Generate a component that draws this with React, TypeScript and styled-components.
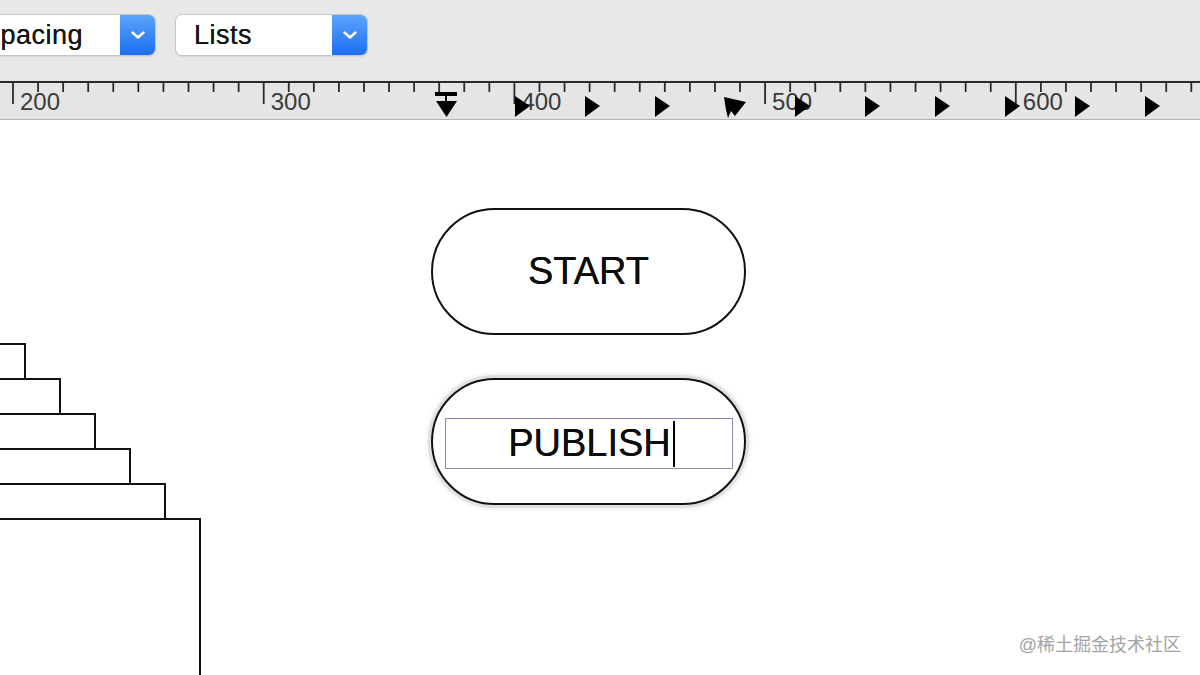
import styled, { createGlobalStyle } from "styled-components";

const GlobalStyle = createGlobalStyle`
  html, body {
    margin: 0;
    padding: 0;
    background: #fff;
    overflow: hidden;
  }
  body {
    font-family: "Liberation Sans", Arial, sans-serif;
  }
`;

const TICK = 25.07;
const FIRST_TICK = 13;
const TAB_STOPS = [515, 585, 655, 795, 865, 935, 1005, 1075, 1145];
const STEPS = [25, 60, 95, 130, 165];

const Chevron = () => (
  <svg width="16" height="10" viewBox="0 0 16 10" fill="none">
    <path
      d="M2.5 2.5l5.5 5 5.5-5"
      stroke="#fff"
      strokeWidth="2.4"
      strokeLinecap="round"
      strokeLinejoin="round"
    />
  </svg>
);

const Select = ({ label, offset }: { label: string; offset?: number }) => (
  <SelectBox $offset={offset}>
    <SelectLabel>{label}</SelectLabel>
    <SelectArrow>
      <Chevron />
    </SelectArrow>
  </SelectBox>
);

const RulerDrawing = () => {
  const ticks = [];
  for (let k = 0; FIRST_TICK + k * TICK < 1200; k++) {
    const x = FIRST_TICK + k * TICK;
    const major = k % 10 === 0;
    ticks.push(
      <line
        key={k}
        x1={x}
        x2={x}
        y1={2}
        y2={major ? 24 : 12}
        stroke="#2a2a2a"
        strokeWidth="1.8"
      />
    );
    if (major) {
      ticks.push(
        <text
          key={`l${k}`}
          x={x + 7}
          y={30}
          fontSize="24"
          fill="#3a3a3a"
          fontFamily="Liberation Sans, Arial, sans-serif"
        >
          {200 + (k / 10) * 100}
        </text>
      );
    }
  }
  return (
    <svg width="1200" height="39" viewBox="0 0 1200 39">
      <rect x="0" y="1" width="1200" height="2" fill="#2a2a2a" />
      {ticks}
      {/* first line indent marker */}
      <rect x="435" y="12" width="22" height="4" fill="#000" />
      <rect x="445" y="15" width="2" height="7" fill="#000" />
      <polygon points="436,21 457,21 446.5,37" fill="#000" />
      {TAB_STOPS.map((x) => (
        <polygon key={x} points={`${x},16 ${x + 15},26 ${x},37`} fill="#000" />
      ))}
      <polygon
        points="724,17 746,22 735,36 731,31 728,38 726,30"
        fill="#000"
      />
    </svg>
  );
};

export default function App() {
  return (
    <>
      <GlobalStyle />
      <Page>
        <Toolbar>
          <Select label="Spacing" offset={-37} />
          <Select label="Lists" />
        </Toolbar>
        <Ruler>
          <RulerDrawing />
        </Ruler>
        <Canvas>
          <Staircase>
            {STEPS.map((w) => (
              <Step key={w} $width={w} />
            ))}
            <Step $width={200} $last />
          </Staircase>
          <Pill $top={88}>START</Pill>
          <Pill $top={258} $selected>
            <TextBox>
              PUBLISH
              <Caret />
            </TextBox>
          </Pill>
          <Watermark>@稀土掘金技术社区</Watermark>
        </Canvas>
      </Page>
    </>
  );
}

const Page = styled.div`
  width: 1200px;
  height: 675px;
  display: flex;
  flex-direction: column;
  overflow: hidden;
`;

const Toolbar = styled.div`
  height: 80px;
  flex-shrink: 0;
  box-sizing: border-box;
  padding-top: 14px;
  background: #e8e8e8;
  display: flex;
  align-items: flex-start;
  gap: 19px;
`;

const SelectBox = styled.div<{ $offset?: number }>`
  margin-left: ${(p) => p.$offset ?? 0}px;
  width: 193px;
  height: 42px;
  box-sizing: border-box;
  display: flex;
  background: #fff;
  border: 1px solid #c6c6c6;
  border-radius: 7px;
  box-shadow: 0 1px 1px rgba(0, 0, 0, 0.08);
  overflow: hidden;
`;

const SelectLabel = styled.span`
  flex: 1;
  padding-left: 18px;
  font-size: 27px;
  letter-spacing: 0.5px;
  line-height: 40px;
  color: #161616;
  white-space: nowrap;
  text-shadow: 0 0 0.3px #161616;
`;

const SelectArrow = styled.span`
  width: 35px;
  display: flex;
  align-items: center;
  justify-content: center;
  background: linear-gradient(#5ba3fb, #1c6ff3);
`;

const Ruler = styled.div`
  height: 40px;
  flex-shrink: 0;
  box-sizing: border-box;
  background: #e5e5e5;
  border-bottom: 1px solid #b4b4b4;
  svg {
    display: block;
  }
`;

const Canvas = styled.div`
  flex: 1;
  position: relative;
  background: #fff;
`;

const Staircase = styled.div`
  position: absolute;
  left: 0;
  top: 223px;
  bottom: 0;
  display: flex;
  flex-direction: column;
`;

const Step = styled.div<{ $width: number; $last?: boolean }>`
  width: ${(p) => p.$width + 1}px;
  height: 35px;
  flex: ${(p) => (p.$last ? 1 : "none")};
  box-sizing: border-box;
  border-top: 2px solid #111;
  border-right: 2px solid #111;
`;

const Pill = styled.div<{ $top: number; $selected?: boolean }>`
  position: absolute;
  left: 431px;
  top: ${(p) => p.$top}px;
  width: 315px;
  height: 127px;
  box-sizing: border-box;
  border: 2.4px solid #111;
  border-radius: 64px;
  display: flex;
  align-items: center;
  justify-content: center;
  font-size: 38px;
  color: #0c0c0c;
  text-shadow: 0 0 0.4px #0c0c0c;
  box-shadow: ${(p) =>
    p.$selected ? "0 0 0 3px #e0e0e0, 0 0 4px 4px #ececec" : "none"};
`;

const TextBox = styled.div`
  margin-top: 4px;
  width: 288px;
  height: 51px;
  box-sizing: border-box;
  border: 1.5px solid #8d8ab3;
  display: flex;
  align-items: center;
  justify-content: center;
  padding-left: 6px;
  font-size: 38px;
`;

const Caret = styled.span`
  width: 2px;
  height: 46px;
  margin-left: 2px;
  background: #000;
`;

const Watermark = styled.div`
  position: absolute;
  right: 19px;
  bottom: 19px;
  font-family: "Liberation Sans", "Noto Sans CJK SC", sans-serif;
  font-size: 18px;
  color: #a3a3a3;
  text-shadow: 0 0 2px #fff;
`;
